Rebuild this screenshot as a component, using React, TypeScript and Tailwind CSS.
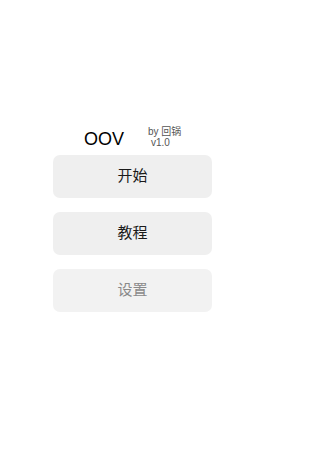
import React from "react";

const font = { fontFamily: '"Liberation Sans", "Noto Sans CJK SC", sans-serif' };

function MenuButton({ label, disabled }: { label: string; disabled?: boolean }) {
  return (
    <button
      disabled={disabled}
      className={`h-[43px] w-[159px] rounded-[7px] text-[15px] ${
        disabled ? "bg-[#f2f2f2] text-[#8a8a8a]" : "bg-[#efefef] text-[#1a1a1a]"
      }`}
    >
      {label}
    </button>
  );
}

export default function App() {
  return (
    <div className="flex h-[471px] w-[265px] flex-col items-center bg-white pt-[126px]" style={font}>
      <div className="flex h-[29px] w-[159px] items-start">
        <span className="ml-[31px] mt-[2px] text-[18px] leading-[22px] text-black">OOV</span>
        <div className="ml-[24px] flex flex-col items-start text-[10px] leading-[11px] text-[#555]">
          <span>by 回锅</span>
          <span className="ml-[3px]">v1.0</span>
        </div>
      </div>
      <div className="flex flex-col gap-[14px]">
        <MenuButton label="开始" />
        <MenuButton label="教程" />
        <MenuButton label="设置" disabled />
      </div>
    </div>
  );
}
